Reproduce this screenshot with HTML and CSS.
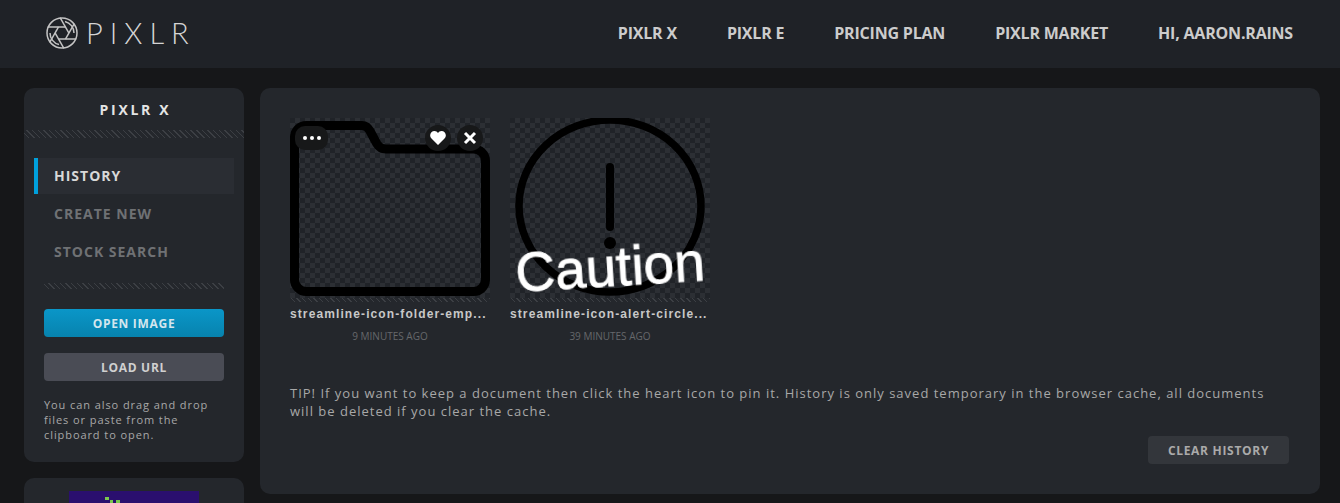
FILE: index.html
```html
<!DOCTYPE html>
<html lang="en">
<head>
    <meta charset="UTF-8">
    <meta name="viewport" content="width=device-width, initial-scale=1.0">
    <title>Pixlr X</title>
    <link rel="stylesheet" href="styles.css">
</head>
<body>

<header class="topbar">
    <a class="logo">
        <svg class="logo-mark" width="32" height="32" viewBox="-16 -16 32 32">
            <defs>
                <line id="blade" x1="-14.2" y1="-6" x2="3.5" y2="-6"></line>
            </defs>
            <circle r="15"></circle>
            <path d="M3 -11.6A12 12 0 0 1 12 0"></path>
            <path d="M-3 11.6A12 12 0 0 1 -12 0"></path>
            <use href="#blade"></use>
            <use href="#blade" transform="rotate(60)"></use>
            <use href="#blade" transform="rotate(120)"></use>
            <use href="#blade" transform="rotate(180)"></use>
            <use href="#blade" transform="rotate(240)"></use>
            <use href="#blade" transform="rotate(300)"></use>
        </svg>
        <span class="logo-text">PIXLR</span>
    </a>
    <nav class="topnav">
        <a>PIXLR X</a>
        <a>PIXLR E</a>
        <a>PRICING PLAN</a>
        <a>PIXLR MARKET</a>
        <a>HI, AARON.RAINS</a>
    </nav>
</header>

<div class="page">
    <aside class="side">
        <div class="panel">
            <h2 class="panel-title">PIXLR X</h2>
            <div class="hatch"></div>
            <ul class="menu">
                <li class="menu-item active">HISTORY</li>
                <li class="menu-item">CREATE NEW</li>
                <li class="menu-item">STOCK SEARCH</li>
            </ul>
            <div class="hatch short"></div>
            <button class="btn btn-blue">OPEN IMAGE</button>
            <button class="btn btn-grey">LOAD URL</button>
            <p class="help">You can also drag and drop files or paste from the clipboard to open.</p>
        </div>
        <div class="panel ad">
            <div class="ad-image">
                <svg width="20" height="12" viewBox="0 0 20 12">
                    <rect x="0" y="0" width="4" height="3"></rect>
                    <rect x="5" y="3" width="3" height="3"></rect>
                    <rect x="11" y="3" width="4" height="3"></rect>
                    <rect x="4" y="7" width="4" height="4"></rect>
                </svg>
            </div>
        </div>
    </aside>

    <main class="main">
        <div class="docs">
            <div class="doc">
                <div class="thumb">
                    <svg class="art" width="200" height="184" viewBox="0 0 200 184">
                        <path class="folder" d="M4.5 20A12 12 0 0 1 16.500 7.500H72Q77 7.500 80 13L87 26Q90 31 96 31H183A12 12 0 0 1 195.500 43V161A12 12 0 0 1 183 173.500H17A12 12 0 0 1 4.500 161Z"></path>
                    </svg>
                    <span class="thumb-btn more"><i></i><i></i><i></i></span>
                    <span class="thumb-btn heart">
                        <svg width="16" height="14" viewBox="0 0 16 14"><path d="M8 14L1.500 7.600C-1.500 4.200 1 0 4.500 0C6 0 7.200 .8 8 2C8.800 .8 10 0 11.500 0C15 0 17.500 4.200 14.500 7.600Z"></path></svg>
                    </span>
                    <span class="thumb-btn close">
                        <svg width="14" height="14" viewBox="0 0 14 14"><path d="M2 2L12 12M12 2L2 12"></path></svg>
                    </span>
                </div>
                <div class="doc-name">streamline-icon-folder-emp...</div>
                <div class="doc-time">9 MINUTES AGO</div>
            </div>
            <div class="doc">
                <div class="thumb">
                    <svg class="art" width="200" height="184" viewBox="0 0 200 184">
                        <ellipse class="ring" cx="100" cy="88" rx="91" ry="86"></ellipse>
                        <path class="bang" d="M100 49V109"></path>
                        <circle cx="100" cy="125" r="6"></circle>
                        <text class="caution" x="100" y="168" text-anchor="middle" transform="rotate(-3.500 100 150)">Caution</text>
                    </svg>
                </div>
                <div class="doc-name">streamline-icon-alert-circle...</div>
                <div class="doc-time">39 MINUTES AGO</div>
            </div>
        </div>
        <p class="tip">TIP! If you want to keep a document then click the heart icon to pin it. History is only saved temporary in the browser cache, all documents will be deleted if you clear the cache.</p>
        <div class="actions">
            <button class="btn btn-dark">CLEAR HISTORY</button>
        </div>
    </main>
</div>

</body>
</html>
```

FILE: styles.css
```css
html, body {
    height: 100%;
}

body {
    margin: 0;
    overflow: hidden;
    background-color: #161719;
    color: #aaa;
    font-family: "Open Sans", Arial, sans-serif;
}

.topbar {
    height: 68px;
    background-color: #1f2227;
    display: flex;
    align-items: center;
    justify-content: space-between;
    padding: 0 47px 3px 46px;
    box-sizing: border-box;
}

.logo {
    display: flex;
    align-items: center;
    gap: 8px;
}

.logo-mark {
    fill: none;
    stroke: #c4c4c4;
    stroke-width: 1.500;
}

.logo-text {
    font-family: Lato, sans-serif;
    font-weight: 300;
    font-size: 29px;
    line-height: 30px;
    letter-spacing: 7px;
    color: #d4d4d4;
}

.topnav {
    display: flex;
    gap: 50px;
}

.topnav a {
    font-size: 16px;
    font-weight: 700;
    letter-spacing: -.2px;
    color: #ccc;
}

.page {
    display: flex;
    gap: 16px;
    height: 435px;
    box-sizing: border-box;
    overflow: hidden;
    padding: 20px 20px 0 24px;
}

.side {
    width: 220px;
    flex: none;
    display: flex;
    flex-direction: column;
    gap: 16px;
}

.panel {
    background-color: #24272c;
    border-radius: 10px;
    padding-bottom: 20px;
}

.panel-title {
    margin: 0;
    height: 42px;
    padding-left: 3px;
    line-height: 44px;
    text-align: center;
    font-size: 14px;
    font-weight: 700;
    letter-spacing: 2.700px;
    color: #e4e4e4;
}

.hatch {
    height: 8px;
    background-image: repeating-linear-gradient(45deg, #24272c 0, #24272c 3px, #3c3f44 3px, #3c3f44 4px);
}

.hatch.short {
    height: 6px;
    margin: 13px 20px 20px;
}

.menu {
    list-style: none;
    margin: 20px 10px 0;
    padding: 0;
}

.menu-item {
    height: 36px;
    margin-bottom: 2px;
    padding-left: 20px;
    line-height: 36px;
    font-size: 14px;
    font-weight: 700;
    letter-spacing: 1px;
    color: #6f7174;
}

.menu-item.active {
    background-color: #2a2d33;
    box-shadow: inset 4px 0 0 #00a0dc;
    color: #d8d8d8;
}

.btn {
    display: block;
    height: 28px;
    padding: 0;
    border: 0;
    border-radius: 4px;
    font-family: "Open Sans", Arial, sans-serif;
    font-size: 12px;
    font-weight: 700;
    letter-spacing: .7px;
}

.btn-blue, .btn-grey {
    width: 180px;
    margin: 0 20px;
}

.btn-blue {
    background: linear-gradient(#0a96c8, #0783ae);
    color: #d4e6ee;
}

.btn-grey {
    margin-top: 16px;
    background-color: #4a4c55;
    color: #d0d0d0;
}

.btn-dark {
    width: 141px;
    background-color: #33363b;
    color: #aaa;
}

.help {
    margin: 16px 20px 0;
    font-size: 11px;
    line-height: 15px;
    letter-spacing: .92px;
    color: #a8a8a8;
}

.ad {
    padding: 13px 0 0;
    height: 60px;
    display: flex;
    justify-content: center;
}

.ad-image {
    width: 130px;
    height: 60px;
    background-color: #2a0f6e;
    padding: 6px 0 0 36px;
    box-sizing: border-box;
}

.ad-image svg {
    display: block;
    fill: #7ac74f;
}

.main {
    width: 1060px;
    height: 406px;
    box-sizing: border-box;
    padding: 30px 31px 0 30px;
    background-color: #24272c;
    border-radius: 10px;
}

.docs {
    display: flex;
    gap: 20px;
}

.doc {
    width: 200px;
}

.thumb {
    position: relative;
    height: 184px;
    overflow: hidden;
    background: repeating-conic-gradient(#2c2f34 0 25%, #202328 0 50%) 0 0 / 10px 10px;
}

.thumb::after {
    content: "";
    position: absolute;
    left: 0;
    right: 0;
    bottom: 0;
    height: 4px;
    background-image: repeating-linear-gradient(45deg, #24272c 0, #24272c 3px, #3c3f44 3px, #3c3f44 4px);
}

.art {
    display: block;
}

.folder {
    fill: none;
    stroke: #000;
    stroke-width: 9;
}

.ring {
    fill: none;
    stroke: #000;
    stroke-width: 7.500;
}

.bang {
    stroke: #000;
    stroke-width: 8;
    stroke-linecap: round;
}

.caution {
    font-family: "Liberation Sans", Arial, sans-serif;
    font-size: 55px;
    fill: #fff;
    stroke: #fff;
    stroke-width: .8;
    filter: blur(.5px);
}

.thumb-btn {
    position: absolute;
    top: 8px;
    height: 24px;
    display: flex;
    align-items: center;
    justify-content: center;
    background-color: #171819;
    border-radius: 12px;
}

.more {
    left: 5px;
    width: 33px;
    gap: 3px;
    border-radius: 10px;
}

.more i {
    width: 4px;
    height: 4px;
    border-radius: 50%;
    background-color: #fff;
}

.heart {
    left: 135px;
    width: 26px;
    height: 26px;
    border-radius: 50%;
    top: 7px;
}

.heart svg {
    fill: #fff;
}

.close {
    left: 167px;
    width: 26px;
    height: 26px;
    border-radius: 50%;
    top: 7px;
}

.close svg {
    stroke: #fff;
    stroke-width: 3;
    fill: none;
}

.doc-name {
    margin-top: 4px;
    font-family: "Liberation Sans", Arial, sans-serif;
    font-size: 12px;
    font-weight: 700;
    line-height: 16px;
    letter-spacing: 1.100px;
    color: #c8c8c8;
    white-space: nowrap;
}

.doc-time {
    margin-top: 7px;
    font-size: 10px;
    line-height: 14px;
    text-align: center;
    color: #66686b;
}

.tip {
    margin: 41px 0 0;
    font-size: 13px;
    line-height: 18px;
    letter-spacing: 1px;
    color: #a8a8a8;
}

.actions {
    display: flex;
    justify-content: flex-end;
    margin-top: 16px;
}
```
